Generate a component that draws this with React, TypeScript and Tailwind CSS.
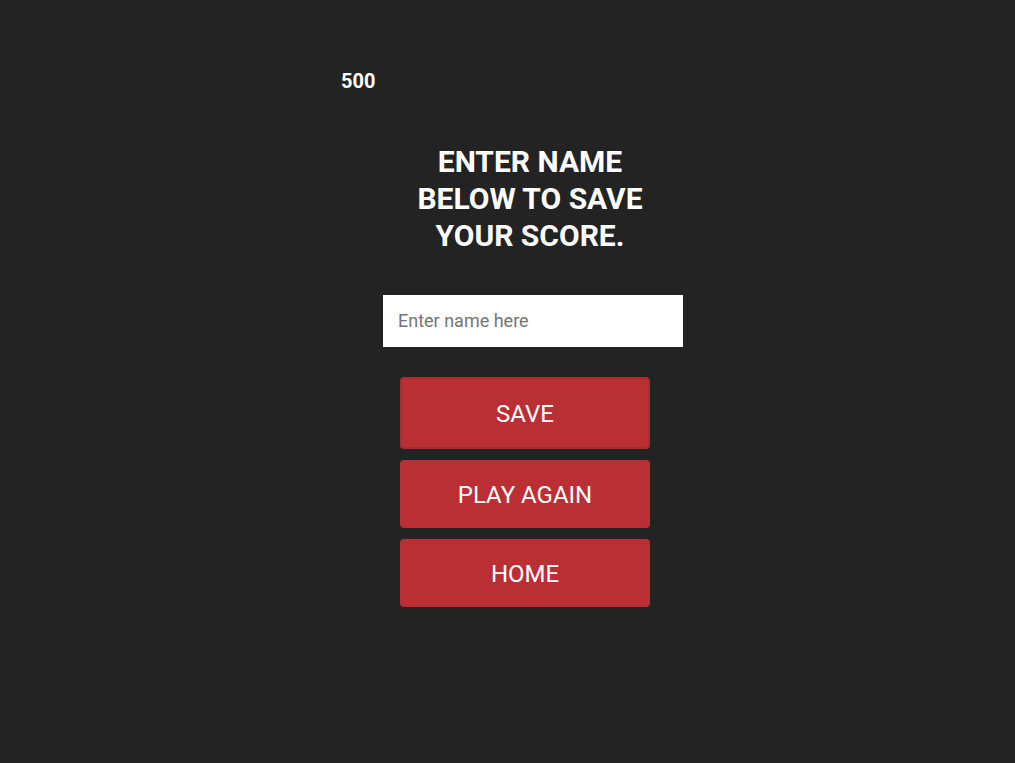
const App = () => {
  return (
    <div className="min-h-[763px] w-full bg-[#232323] font-['Roboto',sans-serif] text-white">
      <div className="ml-[341px] flex w-[378px] flex-col pt-[69px]">
        {/* Score */}
        <p className="text-[20px] font-bold leading-[24px]">500</p>

        {/* Prompt */}
        <h1 className="mt-[50px] text-center text-[30px] font-bold leading-[37px]">
          ENTER NAME
          <br />
          BELOW TO SAVE
          <br />
          YOUR SCORE.
        </h1>

        {/* Name input */}
        <input
          type="text"
          placeholder="Enter name here"
          className="mt-[41px] ml-[42px] h-[52px] w-[300px] bg-white px-[15px] pb-[2px] text-[18px] text-[#333] placeholder:text-[#757575] focus:outline-none"
        />

        {/* Actions */}
        <div className="mt-[30px] ml-[59px] flex w-[250px] flex-col gap-[11px]">
          <button className="h-[72px] rounded-[4px] border-2 border-[#a82d32] bg-[#b92f34] pt-[2px] text-[24px] text-white">
            SAVE
          </button>
          <button className="h-[68px] rounded-[4px] bg-[#b92f34] pt-[2px] text-[24px] text-white">
            PLAY AGAIN
          </button>
          <button className="h-[68px] rounded-[4px] bg-[#b92f34] pt-[2px] text-[24px] text-white">
            HOME
          </button>
        </div>
      </div>
    </div>
  );
};

export default App;
